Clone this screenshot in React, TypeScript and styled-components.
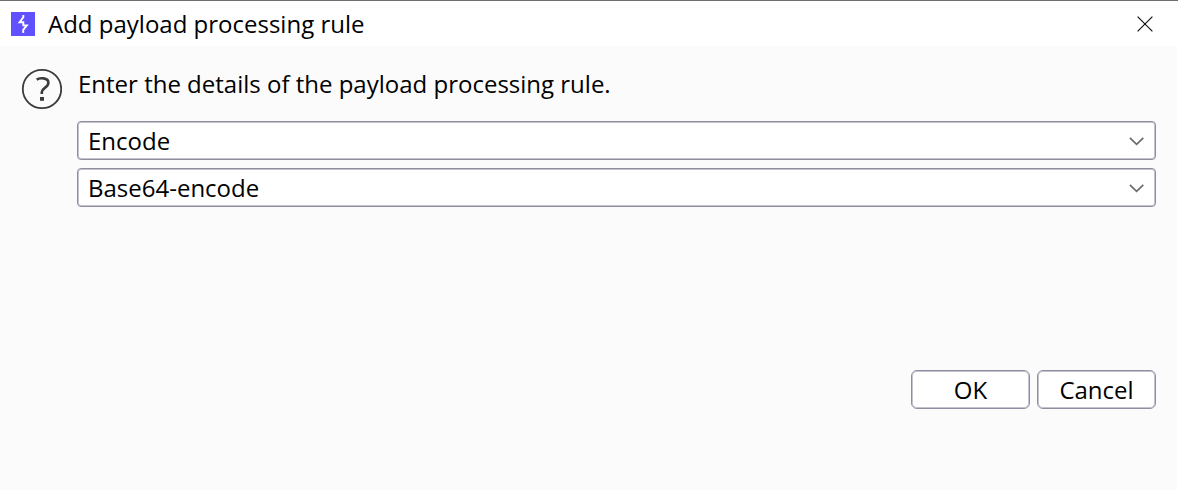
import React from "react";
import styled, { createGlobalStyle } from "styled-components";

const GlobalStyle = createGlobalStyle`
  *, *::before, *::after { box-sizing: border-box; }
  html, body { margin: 0; background: #fff; }
  body, button, select {
    font-family: "Open Sans", "Noto Sans", sans-serif;
    font-size: 24px;
    line-height: 32px;
    color: #000;
  }
`;

const Dialog = styled.main`
  display: flex;
  flex-direction: column;
  min-height: 100vh;
  border-top: 1px solid #6e6e6e;
  background: #fff;
`;

const TitleBar = styled.header`
  display: flex;
  align-items: center;
  gap: 13px;
  height: 45px;
  padding: 0 21px 0 11px;
`;

const Title = styled.h1`
  flex: 1;
  margin: 0;
  font-size: 24px;
  font-weight: 400;
  line-height: 32px;
`;

const CloseButton = styled.button`
  display: flex;
  align-items: center;
  justify-content: center;
  width: 25px;
  height: 25px;
  padding: 0;
  border: 0;
  background: transparent;
`;

const Form = styled.form`
  flex: 1;
  display: flex;
  flex-direction: column;
  margin: 0 1px 1px 0;
  padding: 22px 21px 81px;
  background: #fbfbfb;
`;

const Content = styled.div`
  display: flex;
  align-items: flex-start;
  gap: 15px;
`;

const Fields = styled.div`
  flex: 1;
  display: flex;
  flex-direction: column;
  gap: 8px;
`;

const Message = styled.p`
  margin: 0 1px 13px;
`;

const SelectBox = styled.div`
  display: grid;
  align-items: center;
  > * { grid-area: 1 / 1; }
  > svg {
    justify-self: end;
    margin-right: 11px;
    pointer-events: none;
  }
`;

const Select = styled.select`
  appearance: none;
  width: 100%;
  height: 39px;
  padding: 0 36px 0 10px;
  border: 1px solid #8f8da0;
  border-radius: 4px;
  background: #fff;
  box-shadow: inset 0 0 0 1px #c4c3cd;
`;

const Actions = styled.footer`
  display: flex;
  justify-content: flex-end;
  gap: 7px;
  margin-top: auto;
`;

const ActionButton = styled.button`
  width: 119px;
  height: 39px;
  padding: 0;
  border: 1px solid #8f8da0;
  border-radius: 6px;
  background: #fff;
  box-shadow: inset 0 0 0 1px #c4c3cd;
`;

const Logo = () => (
  <svg width="24" height="24" viewBox="0 0 24 24" aria-hidden="true">
    <path fill="#6050ff" d="M0 0h24v24H0z" />
    <path fill="none" stroke="#fff" strokeWidth="1.9" d="M12.3 3v2.2L8.6 10.2h3.7v3.2h3.5l-3.6 4.4V21" />
  </svg>
);

const CloseIcon = () => (
  <svg width="16" height="16" viewBox="0 0 16 16" fill="none" stroke="#111" strokeWidth="1.2" aria-hidden="true">
    <path d="M.6.6l14.8 14.8M15.4.6.6 15.4" />
  </svg>
);

const HelpIcon = () => (
  <svg width="41" height="42" viewBox="0 0 41 42" fill="none" stroke="#3c3c3c" aria-hidden="true">
    <circle cx="21" cy="21" r="19.2" strokeWidth="1.8" />
    <path strokeWidth="2.6" d="M15.7 11.6c2.8-2 11.7-2.3 11.7 3.2 0 5-6.6 5-6.6 9.2v2" />
    <path fill="#3c3c3c" stroke="none" d="M19 29h4v3.8h-4z" />
  </svg>
);

const Chevron = () => (
  <svg width="16" height="10" viewBox="0 0 16 10" fill="none" stroke="#6b6b70" strokeWidth="1.7" aria-hidden="true">
    <path d="M.9 1.9 7.6 8.4l6.7-6.5" />
  </svg>
);

const RuleSelect = ({ label, options }: { label: string; options: string[] }) => (
  <SelectBox>
    <Select aria-label={label} defaultValue={options[0]}>
      {options.map((option) => (
        <option key={option}>{option}</option>
      ))}
    </Select>
    <Chevron />
  </SelectBox>
);

export default function App() {
  return (
    <>
      <GlobalStyle />
      <Dialog role="dialog" aria-labelledby="dialog-title">
        <TitleBar>
          <Logo />
          <Title id="dialog-title">Add payload processing rule</Title>
          <CloseButton type="button" aria-label="Close">
            <CloseIcon />
          </CloseButton>
        </TitleBar>
        <Form onSubmit={(event) => event.preventDefault()}>
          <Content>
            <HelpIcon />
            <Fields>
              <Message>Enter the details of the payload processing rule.</Message>
              <RuleSelect label="Rule type" options={["Encode"]} />
              <RuleSelect label="Encoding" options={["Base64-encode"]} />
            </Fields>
          </Content>
          <Actions>
            <ActionButton type="submit">OK</ActionButton>
            <ActionButton type="button">Cancel</ActionButton>
          </Actions>
        </Form>
      </Dialog>
    </>
  );
}
